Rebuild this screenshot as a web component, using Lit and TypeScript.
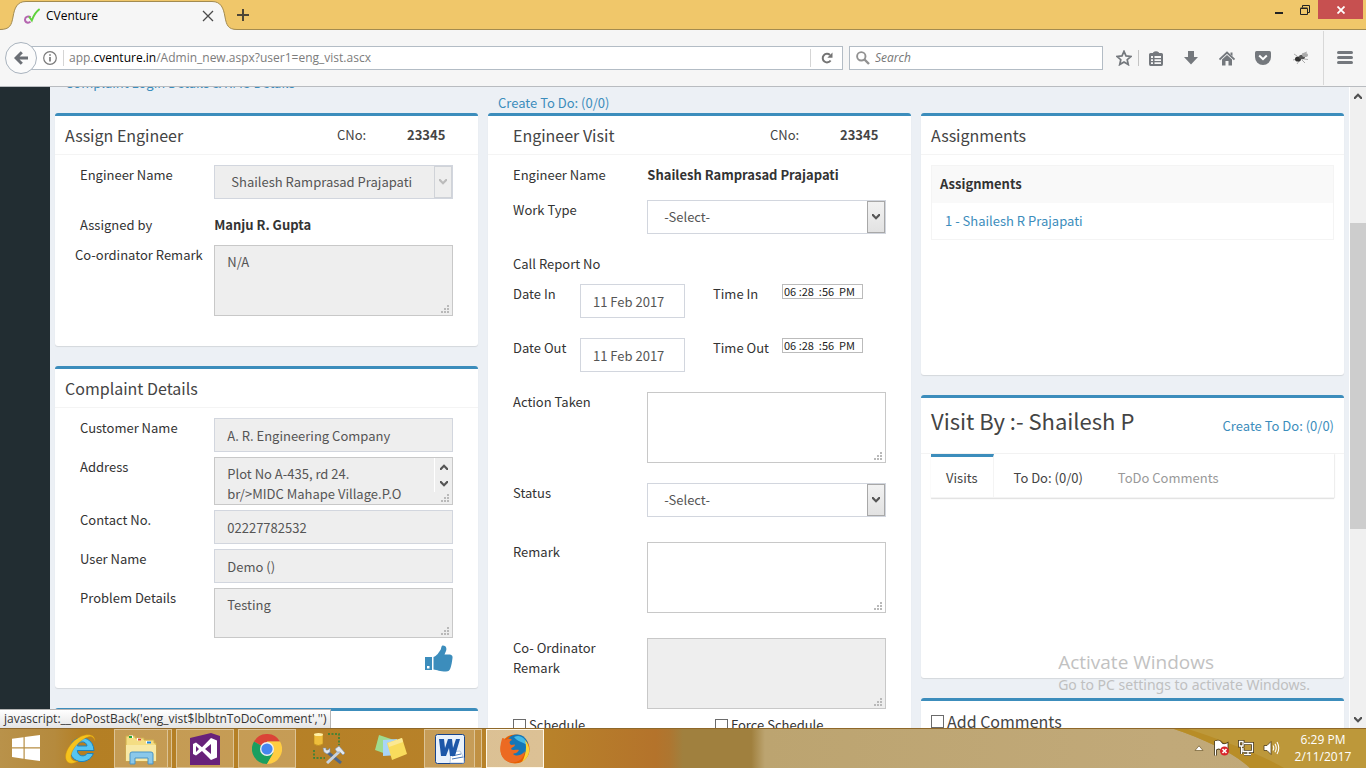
import { LitElement, html, css, svg, nothing } from "lit";
import { customElement, property } from "lit/decorators.js";

const uiFont = css`"Open Sans", "Noto Sans", sans-serif`;
const pageFont = css`"Noto Sans CJK SC", "Noto Sans", sans-serif`;

const chevron = (up: boolean) => svg`
  <svg class="chevron" viewBox="0 0 8 6" width="8" height="6" aria-hidden="true">
    <path d=${up ? "M0 4.2 4 0.2 8 4.2V6H6.6L4 3.2 1.4 6H0z" : "M0 1.8 4 5.8 8 1.8V0H6.6L4 2.8 1.4 0H0z"} fill="currentColor"/>
  </svg>`;

@customElement("browser-chrome")
export class BrowserChrome extends LitElement {
  static styles = css`
    :host { display: block; font: 12px/16px ${uiFont}; color: #000; }
    button { border: 0; background: none; padding: 0; margin: 0; font: inherit; color: inherit; display: flex; align-items: center; justify-content: center; }
    svg { display: block; flex: none; }
    .titlebar { display: flex; height: 29px; background: #f0c76a; border-bottom: 1px solid #a38b50; }
    .tab { display: grid; width: 237px; height: 30px; flex: none; }
    .tab > * { grid-area: 1 / 1; }
    .tab-body { display: flex; align-items: center; padding: 2px 23px 0 24px; }
    .tab-title { flex: 1; padding-left: 6px; }
    .tab-title, .url { white-space: nowrap; }
    .window-buttons { margin-left: auto; display: flex; align-items: flex-start; padding-right: 3px; }
    .window-buttons button { width: 26px; height: 19px; }
    .window-buttons .close { width: 45px; background: #c75050; }
    .toolbar { display: flex; align-items: center; height: 56px; background: #f6f6f6; border-bottom: 1px solid #b9bcc0; color: #74787d; }
    .back { width: 32px; height: 32px; margin: 0 -5px 0 5px; border: 1px solid #a9b3be; border-radius: 50%; background: #fbfbfb; z-index: 1; }
    .address { flex: 1; display: flex; align-items: center; height: 22px; border: 1px solid #b3bcc5; background: #fff; margin-left: -1px; padding-left: 11px; }
    .info { padding-right: 6px; }
    .url { flex: 1; border-left: 1px solid #d5d5d5; padding-left: 5px; color: #7c7c7c; }
    .url b { font-weight: 400; color: #000; }
    .reload { width: 32px; height: 18px; border-left: 1px solid #d5d5d5; }
    .search { display: flex; align-items: center; gap: 5px; height: 22px; width: 246px; border: 1px solid #b3bcc5; background: #fff; margin: 0 6px; padding-left: 6px; }
    .search input { flex: 1; min-width: 0; border: 0; padding: 0; background: none; font: 12px/16px ${uiFont}; outline: 0; }
    .search input::placeholder { color: #777; font-style: italic; opacity: 1; }
    .icon { width: 36px; height: 36px; }
    .star { width: 30px; height: 16px; border-right: 1px solid #c4c4c4; }
    .list { width: 34px; }
    .addon { width: 42px; padding-right: 2px; }
    .menu { width: 43px; height: 54px; border-left: 1px solid #d8d8d8; }
  `;

  render() {
    return html`
      <div class="titlebar">
        <div class="tab">
          <svg width="237" height="30" viewBox="0 0 237 30" aria-hidden="true">
            <path d="M0 29.5C10 29.5 11.5 25 13 17C14.5 8 17 1.5 26 1.5H212C221 1.5 223.500 8 225 17C226.500 25 228 29.500 237 29.500V30H0z" fill="#f6f6f6"/>
            <path d="M0 29.500C10 29.500 11.500 25 13 17C14.500 8 17 1.500 26 1.500H212C221 1.500 223.500 8 225 17C226.500 25 228 29.500 237 29.500" fill="none" stroke="#a38b50"/>
          </svg>
          <div class="tab-body">
            <svg width="16" height="16" viewBox="0 0 16 16" aria-hidden="true">
              <path d="M6.500 9.200C5 7.800 1.200 8.200 1 11.500 1 14.800 4.500 15.600 6.500 13.600" fill="none" stroke="#b566b0" stroke-width="2"/>
              <path d="M5 8.500 7.800 12.500C9.500 7.500 12 3.500 15.600 1" fill="none" stroke="#5fd23c" stroke-width="1.900"/>
            </svg>
            <span class="tab-title">CVenture</span>
            <button aria-label="Close tab"><svg width="12" height="12" viewBox="0 0 12 12"><path d="M1 1 11 11M11 1 1 11" stroke="#4a4a4a" stroke-width="1.300"/></svg></button>
          </div>
        </div>
        <button aria-label="New tab"><svg width="12" height="12" viewBox="0 0 12 12"><path d="M6 0V12M0 6H12" stroke="#4d4636" stroke-width="2"/></svg></button>
        <div class="window-buttons">
          <button aria-label="Minimize"><svg width="8" height="14" viewBox="0 0 8 14"><path d="M0 10H8" stroke="#222" stroke-width="2"/></svg></button>
          <button aria-label="Restore"><svg width="10" height="10" viewBox="0 0 10 10"><path d="M2.500 2.500V0.500H9.500V7.500H7.500" fill="none" stroke="#222"/><path d="M.500 3.500H7.500V9.500H.500zM.500 3H7.500" fill="none" stroke="#222"/></svg></button>
          <button class="close" aria-label="Close"><svg width="8" height="8" viewBox="0 0 8 8"><path d="M.500 .500 7.500 7.500M7.500 .500 .500 7.500" stroke="#fff" stroke-width="1.800"/></svg></button>
        </div>
      </div>
      <div class="toolbar">
        <button class="back" aria-label="Back"><svg width="14" height="14" viewBox="0 0 14 14"><path d="M7.800 1.200 2 7 7.800 12.800M2.500 7H14" fill="none" stroke="#6b6f75" stroke-width="3"/></svg></button>
        <div class="address">
          <span class="info"><svg width="14" height="14" viewBox="0 0 14 14"><circle cx="7" cy="7" r="6.300" fill="none" stroke="#7a7a7a" stroke-width="1.200"/><path d="M7 6V10.500M7 3.300V4.800" stroke="#7a7a7a" stroke-width="1.700"/></svg></span>
          <span class="url">app.<b>cventure.in</b>/Admin_new.aspx?user1=eng_vist.ascx</span>
          <button class="reload" aria-label="Reload"><svg width="12" height="12" viewBox="0 0 12 12"><path d="M9.600 8.500A4.300 4.300 0 1 1 9 3" fill="none" stroke="#747474" stroke-width="2"/><path d="M6.300 5.700H11.500V.500z" fill="#747474"/></svg></button>
        </div>
        <label class="search">
          <svg width="14" height="14" viewBox="0 0 14 14"><circle cx="5.300" cy="5.300" r="4.200" fill="none" stroke="#919191" stroke-width="1.900"/><path d="M8.500 8.500 13 13" stroke="#919191" stroke-width="2.400"/></svg>
          <input type="search" placeholder="Search" aria-label="Search">
        </label>
        <button class="icon star" aria-label="Bookmark"><svg width="16" height="16" viewBox="0 0 16 16"><path d="M8 1.300 10 5.900 15 6.400 11.200 9.700 12.300 14.600 8 12 3.700 14.600 4.800 9.700 1 6.400 6 5.900z" fill="none" stroke="#74787d" stroke-width="1.700"/></svg></button>
        <button class="icon list" aria-label="Library"><svg width="14" height="15" viewBox="0 0 14 15"><path d="M4 2V1.500Q7-1 10 1.500V2H12.500Q14 2 14 3.500V13Q14 15 12.500 15H1.500Q0 15 0 13V3.500Q0 2 1.500 2zM2 5V7H4V5zM5.500 5V7H12V5zM2 8.200V10H4V8.200zM5.500 8.200V10H12V8.200zM2 11.200V13H4V11.200zM5.500 11.200V13H12V11.200z" fill="#74787d" fill-rule="evenodd"/></svg></button>
        <button class="icon" aria-label="Downloads"><svg width="14" height="14" viewBox="0 0 14 14"><path d="M4 0H10V6H14L7 13.500 0 6H4z" fill="#74787d"/></svg></button>
        <button class="icon" aria-label="Home"><svg width="16" height="15" viewBox="0 0 16 15"><path d="M.500 8.500 8 1.500 15.500 8.500" fill="none" stroke="#74787d" stroke-width="1.800"/><path d="M3 8.500 8 4 13 8.500V14.500H9.500V10H6.500V14.500H3zM11.500 1.500H13.500V5L11.500 3.500z" fill="#74787d"/></svg></button>
        <button class="icon" aria-label="Pocket"><svg width="16" height="14" viewBox="0 0 16 14"><path d="M1.500 0H14.500Q16 0 16 1.500V6A8 8 0 0 1 0 6V1.500Q0 0 1.500 0z" fill="#74787d"/><path d="M4.200 4.500 8 8.200 11.800 4.500" fill="none" stroke="#fff" stroke-width="2"/></svg></button>
        <button class="icon addon" aria-label="Add-on"><svg width="16" height="14" viewBox="0 0 16 14"><path d="M4 5 1 3M4 8 0 9M6 10 4 13M9 9 12 12M11 8 15 8.500M9 3 14 1" stroke="#999" stroke-width=".800"/><ellipse cx="5" cy="8" rx="3" ry="2.600" fill="#333"/><ellipse cx="9" cy="6" rx="3" ry="2.300" fill="#555"/><ellipse cx="12" cy="4" rx="3" ry="2" fill="#aaa"/></svg></button>
        <button class="menu" aria-label="Menu"><svg width="16" height="14" viewBox="0 0 16 14"><path d="M1.500 1.600H14.500M1.500 6.600H14.500M1.500 11.600H14.500" stroke="#74787d" stroke-width="3" stroke-linecap="round"/></svg></button>
      </div>`;
  }
}

@customElement("task-bar")
export class TaskBar extends LitElement {
  static styles = css`
    :host { display: block; height: 40px; font: 12px/17px ${uiFont}; }
    svg { display: block; flex: none; }
    .bar { display: grid; height: 40px; background: linear-gradient(90deg, #b9924a 0, #b58a3d 4%, #b47f24 6%, #b8822a 40%, #b4732b 48%, #ae7630 49%, #a0803e 50%, #a0803e 55%, #bca470 56%, #c1a979 85%, #c0a878 100%); box-shadow: inset 0 1px #8f682a; }
    .bar > * { grid-area: 1 / 1; }
    .sweep { width: 220px; height: 40px; justify-self: end; }
    .items { display: flex; align-items: stretch; min-width: 0; }
    button, .edge { box-sizing: border-box; }
    button { display: flex; align-items: center; justify-content: center; margin: 0; padding: 0; border: 0; background: none; }
    .start { width: 52px; }
    .plain { width: 58px; margin-right: 4px; }
    .app { width: 58px; margin: 1px 4px 0 0; border: 1px solid #dcc395; background: #ffffff38; }
    .stack { width: 54px; margin-right: 0; }
    .edge { width: 4px; margin: 1px 4px 0 0; border: solid #dcc395; border-width: 1px 1px 1px 0; background: #ffffff20; }
    .word { width: 51px; }
    .edge-wide { width: 7px; }
    .active { background: #ffffff80; border-color: #fff8e8; }
    .tray { display: flex; align-items: center; justify-content: flex-end; gap: 8px; color: #fff; }
    .clock { text-align: center; width: 60px; margin: 0 13px 0 5px; }
  `;

  render() {
    return html`
      <div class="bar">
        <svg class="sweep" viewBox="0 0 220 40" preserveAspectRatio="none" aria-hidden="true">
          <path d="M28 1H220V40H104C88 25 60 12 28 1z" fill="#bd983a"/>
          <path d="M28 1H42C75 12 112 25 138 40H104C88 25 60 12 28 1z" fill="#b88d27"/>
        </svg>
        <div class="items">
          <button class="start" aria-label="Start"><svg width="28" height="26" viewBox="0 0 28 26"><path d="M0 3.800 11.500 2.200V12.300H0zM12.700 2 28 0V12.300H12.700zM0 13.500H11.500V23.700L0 22.100zM12.700 13.500H28V26L12.700 23.900z" fill="#fff"/></svg></button>
          <button class="plain" aria-label="Internet Explorer"><svg width="32" height="32" viewBox="0 0 32 32"><path d="M29 18.500H12.300C12.600 24.600 20 25.300 22 21.500H28.300C24 33.500 5 32 5 17.500 5 2.500 28 1 29 18.500zM12.500 14H22C21.500 8.500 13 8.500 12.500 14z" fill="#56c5f1" stroke="#1d83bd"/><path d="M30 9C30 0 17 1 8 10 0 18-2 28 4 31 7 32 10 31 13 29 6 30 4 25 8 18 13 9 24 3 27 5 29 6 29 7 30 9z" fill="#f6c31c" stroke="#c98a10" stroke-width=".500"/></svg></button>
          <button class="app stack" aria-label="File Explorer"><svg width="34" height="32" viewBox="0 0 34 32"><path d="M2 3H11V5H20V7H30V10H32V28H2z" fill="#f4dd83" stroke="#cfae4d"/><path d="M5 2.500H9V5H5zM13 5H17V7.500H13zM22 8H27V10.500H22z" fill="#fff"/><path d="M5 3H8V5H5z" fill="#25a53a"/><path d="M14 5.500H17V7.500H14z" fill="#d84a2b"/><path d="M23 8.500H27V10.500H23z" fill="#2589d2"/><path d="M2 12H32V28H2z" fill="#f8e9a6"/><path d="M6 31V21Q6 19 8 19H27Q29 19 29 21V31H24V25H11V31z" fill="#8ac8ea" stroke="#4a94c5"/></svg></button>
          <span class="edge"></span>
          <button class="app" aria-label="Visual Studio"><svg width="30" height="32" viewBox="0 0 30 32"><path d="M0 5 21 0 30 3V32H0z" fill="#68217a"/><path d="M3 11 6 9.500 12 14.200 21 5 27 7.500V24.500L21 27 12 18 6 22.500 3 21zM6 13V19L9 16zM15 16 21 21V11z" fill="#fff" fill-rule="evenodd"/></svg></button>
          <button class="app" aria-label="Chrome"><svg width="30" height="30" viewBox="0 0 30 30"><path d="M15 15 2 7.500A15 15 0 0 1 28 7.500H15z" fill="#db4437"/><path d="M15 15 2 7.500A15 15 0 0 0 15 30L21.500 18.700z" fill="#1a9f60"/><path d="M15 7.500H28A15 15 0 0 1 15 30L21.500 18.700z" fill="#ffcd42"/><circle cx="15" cy="15" r="7" fill="#f1f1f1"/><circle cx="15" cy="15" r="5.600" fill="#4587f0"/></svg></button>
          <button class="plain" aria-label="Database tools"><svg width="32" height="32" viewBox="0 0 32 32"><path d="M15 2H26V13M1 18V26H12" fill="none" stroke="#28833b" stroke-width="1.500" stroke-dasharray="2 1.500"/><path d="M1 2.500Q5 0 10 2.500V12Q5 15 1 12z" fill="#efbe3b" stroke="#b98717" stroke-width=".600"/><ellipse cx="5.500" cy="2.500" rx="4.500" ry="1.500" fill="#fff0a8"/><path d="M13 19 28 31" stroke="#4e6788" stroke-width="3"/><path d="M28 18 14 31" stroke="#c7d2de" stroke-width="3"/><path d="M10 16 13 16 13 18 15 18 17 16 17 20 14 22 11 20zM22 17 26 14 32 21 30 23 27 20 24 20z" fill="#e3e8ef" stroke="#7890ac" stroke-width=".600"/></svg></button>
          <button class="plain" aria-label="Sticky Notes"><svg width="34" height="28" viewBox="0 0 34 28"><path d="M5 1 20 6 15 21 1 16z" fill="#9fdc8f"/><path d="M9 6 23 5 24 21 9 22z" fill="#a9d4f7"/><path d="M13 9 28 4 33 20 18 26z" fill="#f9dc5c"/><path d="M14 9 28 4 29 8 15 13z" fill="#fbe893"/></svg></button>
          <button class="app stack word" aria-label="Word"><svg width="30" height="30" viewBox="0 0 30 30"><rect x=".500" y=".500" width="29" height="29" rx="2" fill="#e9f1fb" stroke="#17448c"/><path d="M16 18 25 17 29 24V29H15z" fill="#fff" stroke="#9db5d4" stroke-width=".700"/><path d="M17 22 26 20M17 25 28 23" stroke="#4877b7"/><path d="M4 5H9L10 14 13 5H17L18 14 21 5H25L20 22H15L14 14 11 22H6z" fill="#1d57a8"/></svg></button>
          <span class="edge edge-wide"></span>
          <button class="app active" aria-label="Firefox"><svg width="30" height="30" viewBox="0 0 30 30"><circle cx="15" cy="15" r="14.500" fill="#e66000"/><circle cx="17" cy="11.500" r="11" fill="#1477b8"/><path d="M14 3C20 0 26 4 27 11 23 8 18 8 14 3z" fill="#46b9e4"/><path d="M25 6C31 12 31 23 22 28 26 21 27 13 25 6z" fill="#fcd336"/><path d="M2 5C2 3 4 4 6 6 9 4 11 5 12 6 9 7 9 9 11 11L15 10.500C15 13 12 13 11 15 13 17 17 15 19 16 17 20 14 19 13 20 18 24 24 19 25 17 24 28 11 32 4 25-1 20 0 11 2 5z" fill="#ec6a22"/></svg></button>
        </div>
        <div class="tray">
          <svg width="10" height="6" viewBox="0 0 10 6"><path d="M1 5.500 5 .800 9 5.500z" fill="#fff" stroke="#6e592a" stroke-width=".700"/></svg>
          <svg width="18" height="18" viewBox="0 0 18 18"><path d="M3.500 2V16.500M3.500 3Q7 1 9 4T15 5V11Q11 12 9 10T4 10z" fill="#fff" stroke="#4b3b1a" stroke-width="3"/><path d="M3.500 2V16.500M3.500 3Q7 1 9 4T15 5V11Q11 12 9 10T4 10z" fill="#fff" stroke="#fff" stroke-width="1.200"/><circle cx="12.500" cy="12" r="4.500" fill="#d8262c"/><path d="M10.500 10 14.500 14M14.500 10 10.500 14" stroke="#fff" stroke-width="1.600"/></svg>
          <svg width="17" height="16" viewBox="0 0 17 16"><g fill="none"><path d="M6 3.500H14.500V11.500H5V8M10 11.500V14M6 14.500H13M1.500 1.500H5V6H1.500zM3.500 6V14" stroke="#4b3b1a" stroke-width="3"/><path d="M6 3.500H14.500V11.500H5V8M10 11.500V14M6 14.500H13M1.500 1.500H5V6H1.500zM3.500 6V14" stroke="#fff" stroke-width="1.300"/></g></svg>
          <svg width="17" height="16" viewBox="0 0 17 16"><path d="M1 5.500H4L8 1.500V14.500L4 10.500H1z" fill="#fff" stroke="#4b3b1a" stroke-width=".800"/><path d="M10 5.500Q11.500 8 10 10.500M12 3.800Q14.500 8 12 12.200M14 2Q17.500 8 14 14" fill="none" stroke="#fff" stroke-width="1.100"/></svg>
          <div class="clock">6:29 PM<br>2/11/2017</div>
        </div>
      </div>`;
  }
}

type FieldKind = "input" | "textarea" | "select";

@customElement("form-control")
export class FormControl extends LitElement {
  @property() kind: FieldKind = "input";
  @property() value = "";
  @property() label = "";
  @property({ type: Boolean }) disabled = false;
  @property() size = "tall";

  static styles = css`
    :host { display: block; min-width: 0; font: 13px/20px ${pageFont}; }
    .wrap { display: grid; }
    .wrap > * { grid-area: 1 / 1; }
    .control { box-sizing: border-box; width: 100%; height: 34px; margin: 0; padding: 0 12px; border: 1px solid #d2d6de; border-radius: 0; background: #fff; color: #555; font: inherit; outline: 0; opacity: 1; appearance: none; }
    select.control { padding: 0 20px 0 16px; }
    textarea.control { display: block; padding: 6px 12px; border-color: #c8c8c8; resize: none; overflow: hidden; }
    .control:disabled { background: #eee; color: #555; }
    textarea.tall { height: 71px; }
    textarea.medium { height: 50px; }
    textarea.short { height: 48px; }
    .arrow { display: flex; align-items: center; justify-content: center; justify-self: end; box-sizing: border-box; width: 18px; margin: 1px; border: 1px solid #a8a8a8; background: linear-gradient(#f2f2f2, #e2e2e2); color: #555; pointer-events: none; }
    .arrow.off { border-color: #d0d3d8; background: #eee; color: #bbb; }
    .grip { justify-self: end; align-self: end; margin: 3px 4px; pointer-events: none; }
    .spin { display: flex; flex-direction: column; justify-content: space-around; align-items: center; justify-self: end; align-self: start; width: 17px; height: 34px; margin: 1px; border-left: 1px solid #fff; color: #555; }
  `;

  private renderArea() {
    return html`
      <textarea class="control ${this.size}" aria-label=${this.label} ?disabled=${this.disabled} .value=${this.value}></textarea>
      ${this.size === "short" ? html`<span class="spin">${chevron(true)}${chevron(false)}</span>` : nothing}
      <svg class="grip" width="8" height="8" viewBox="0 0 8 8" aria-hidden="true">
        <path d="M6 0H8V2H6zM3 3H5V5H3zM6 3H8V5H6zM0 6H2V8H0zM3 6H5V8H3zM6 6H8V8H6z" fill="#b9b9b9"/>
      </svg>`;
  }

  render() {
    const body = this.kind === "textarea"
      ? this.renderArea()
      : this.kind === "select"
        ? html`<select class="control" aria-label=${this.label} ?disabled=${this.disabled}><option>${this.value}</option></select>
            <span class="arrow ${this.disabled ? "off" : ""}">${chevron(false)}</span>`
        : html`<input class="control" type="text" aria-label=${this.label} ?disabled=${this.disabled} .value=${this.value}>`;
    return html`<div class="wrap">${body}</div>`;
  }
}

@customElement("app-root")
export class AppRoot extends LitElement {
  static styles = css`
    :host { display: flex; flex-direction: column; height: 100vh; overflow: hidden; font: 13px/20px ${pageFont}; color: #333; }
    a { color: #3c8dbc; text-decoration: none; }
    h2, h3 { margin: 0; font-weight: 400; color: #444; }
    h3 { font-size: 16px; line-height: 20px; }
    h2 { font-size: 22px; line-height: 26px; }
    .viewport { flex: 1; min-height: 0; display: flex; position: relative; overflow: hidden; background: #ecf0f5; }
    .sidebar { width: 50px; background: #222d32; }
    .content { flex: 1; min-width: 0; padding: 0 5px; }
    .crumbs { display: flex; align-items: flex-end; height: 6px; padding-left: 10px; }
    .columns { display: grid; grid-template-columns: repeat(3, minmax(0, 1fr)); gap: 10px; }
    .column { display: flex; flex-direction: column; gap: 20px; min-width: 0; }
    .lead { height: 20px; margin-bottom: -20px; padding-left: 10px; }
    .box { background: #fff; border-top: 3px solid #3c8dbc; border-radius: 3px; box-shadow: 0 1px 1px rgba(0, 0, 0, .1); }
    .head { display: grid; grid-template-columns: 1fr 70px 71px; align-items: center; height: 38px; padding-left: 10px; border-bottom: 1px solid #f4f4f4; color: #444; }
    .indent { padding-left: 25px; }
    .head-visit { height: 55px; grid-template-columns: 1fr auto; padding-right: 10px; }
    .head-visit h2 { align-self: start; padding-top: 9px; }
    .form { display: grid; gap: 5px; padding: 10px 25px 0; }
    .row { display: grid; grid-template-columns: 9fr 16fr; align-items: start; }
    .assign .form { gap: 10px; padding-bottom: 30px; }
    .pull { margin-left: -5px; }
    .select-row { padding-bottom: 6px; }
    .complaint .form { padding-bottom: 16px; }
    .thumb { display: flex; justify-content: flex-end; padding-top: 2px; }
    .thumb svg { display: block; }
    .visit .form { gap: 25px; }
    .visit .name-row { margin-bottom: -10px; }
    .visit .report-row { margin: -5px 0 -15px; }
    .times { display: grid; grid-template-columns: 67fr 133fr 69fr 104fr; align-items: start; gap: 20px 0; margin-bottom: -5px; }
    .times form-control { width: 105px; }
    .time { box-sizing: border-box; width: 81px; height: 15px; padding: 0 0 1px 1px; border: 1px solid #bbb; background: #fff; color: #222; font: 11px/12px ${pageFont}; outline: 0; }
    .action-row { margin-bottom: -5px; }
    .wrap-label { width: 90px; }
    .checks { display: grid; grid-template-columns: 202fr 171fr; margin-top: -19px; }
    .check { display: flex; align-items: center; gap: 3px; }
    .check input { appearance: none; width: 13px; height: 13px; margin: 0; border: 1px solid #6b6b6b; background: #fff; }
    .assignments { min-height: 259px; }
    .pad { padding: 10px 10px 0; }
    table { width: 100%; border-collapse: collapse; border: 1px solid #f4f4f4; }
    th, td { text-align: left; padding: 8px; height: 20px; }
    th { background: #f9f9f9; padding-bottom: 9px; color: #333; }
    td { padding-left: 13px; }
    .visits { min-height: 280px; }
    .tabs { display: flex; margin: 0 10px; height: 43px; box-shadow: 0 1px 1px rgba(0, 0, 0, .1), 1px 0 1px rgba(0, 0, 0, .05); border-bottom: 1px solid #f4f4f4; gap: 5px; }
    .tabs a { display: flex; align-items: center; padding: 5px 15px 0; color: #444; }
    .tabs .current { padding: 2px 15px 0; border-top: 3px solid #3c8dbc; border-right: 1px solid #f4f4f4; background: #fff; }
    .tabs .muted { padding-left: 15px; color: #999; }
    .comments .check { padding: 10px; font-size: 16px; color: #444; }
    .spacer { height: 60px; }
    .scrollbar { display: flex; flex-direction: column; width: 16px; border-left: 1px solid #fff; background: #f0f0f0; color: #505050; }
    .scroll-end { display: flex; align-items: center; justify-content: center; height: 17px; }
    .track { flex: 1; display: grid; grid-template-rows: 119fr 306fr 182fr; }
    .thumb-bar { grid-row: 2; background: #cdcdcd; }
    .status { position: absolute; left: 0; bottom: 0; box-sizing: border-box; height: 19px; padding: 0 4px; border: solid #b5b5b5; border-width: 1px 1px 0 0; background: linear-gradient(#fff, #e4e4e4); color: #333; font: 12px/17px ${uiFont}; }
    .watermark { position: absolute; right: 56px; bottom: 33px; color: #bbb; font: 14px/20px "Noto Sans", sans-serif; opacity: .900; }
    .watermark p { margin: 0; }
    .watermark .big { font: 19px/26px "Open Sans", sans-serif; }
  `;

  private field(label: string, kind: FieldKind, value: string, opts: { size?: string; disabled?: boolean; row?: string; text?: string } = {}) {
    return html`
      <div class="row ${opts.row ?? ""}">
        <label class=${opts.text ?? ""}>${label}</label>
        <form-control kind=${kind} label=${label} value=${value} size=${opts.size ?? "tall"} ?disabled=${opts.disabled ?? false}></form-control>
      </div>`;
  }

  private caseHead(title: string, indent = "") {
    return html`<header class="head ${indent}"><h3>${title}</h3><span>CNo:</span><b>23345</b></header>`;
  }

  private check(text: string) {
    return html`<label class="check"><input type="checkbox"><span>${text}</span></label>`;
  }

  private dateRow(suffix: string) {
    return html`
      <label>Date ${suffix}</label>
      <form-control label="Date ${suffix}" value="11 Feb 2017"></form-control>
      <label for="time-${suffix}">Time ${suffix}</label>
      <input class="time" id="time-${suffix}" type="text" value="06 :28  :56  PM">`;
  }

  render() {
    const off = { disabled: true };
    return html`
      <browser-chrome></browser-chrome>
      <div class="viewport">
        <nav class="sidebar"></nav>
        <main class="content">
          <div class="crumbs"><a href="#">Complaint Login Details &amp; RMS Details</a></div>
          <div class="columns">
            <div class="column">
              <div class="lead"></div>
              <section class="box assign">
                ${this.caseHead("Assign Engineer")}
                <div class="form">
                  ${this.field("Engineer Name", "select", "Shailesh Ramprasad Prajapati", { disabled: true, row: "select-row" })}
                  <div class="row"><span>Assigned by</span><b>Manju R. Gupta</b></div>
                  ${this.field("Co-ordinator Remark", "textarea", "N/A", { disabled: true, text: "pull" })}
                </div>
              </section>
              <section class="box complaint">
                <header class="head"><h3>Complaint Details</h3></header>
                <div class="form">
                  ${this.field("Customer Name", "input", "A. R. Engineering Company", off)}
                  ${this.field("Address", "textarea", "Plot No A-435, rd 24.\nbr/>MIDC Mahape Village.P.O", { disabled: true, size: "short" })}
                  ${this.field("Contact No.", "input", "02227782532", off)}
                  ${this.field("User Name", "input", "Demo ()", off)}
                  ${this.field("Problem Details", "textarea", "Testing", { disabled: true, size: "medium" })}
                  <div class="thumb">
                    <a href="#" aria-label="Approve"><svg width="28" height="27" viewBox="0 0 28 27">
                      <path d="M0 12H7V25H0zM2 21V23.500H4.500V21z" fill="#3c8dbc" fill-rule="evenodd"/>
                      <path d="M8.500 12C12 11 14 7 15.500 5 16.500 3 16 .500 18 .500 21 .500 22 3.500 21 6L19.500 9.500H25Q28 10 27.500 13C27 17 26.500 20 25.500 23Q24.500 26.500 21 26.500C15 26.500 12 25 8.500 24.500z" fill="#3c8dbc"/>
                    </svg></a>
                  </div>
                </div>
              </section>
              <section class="box"><div class="spacer"></div></section>
            </div>
            <div class="column">
              <div class="lead"><a href="#">Create To Do: (0/0)</a></div>
              <section class="box visit">
                ${this.caseHead("Engineer Visit", "indent")}
                <div class="form">
                  <div class="row name-row"><span>Engineer Name</span><b>Shailesh Ramprasad Prajapati</b></div>
                  ${this.field("Work Type", "select", "-Select-")}
                  <div class="row report-row"><span>Call Report No</span></div>
                  <div class="times">${this.dateRow("In")}${this.dateRow("Out")}</div>
                  ${this.field("Action Taken", "textarea", "", { row: "action-row" })}
                  ${this.field("Status", "select", "-Select-")}
                  ${this.field("Remark", "textarea", "")}
                  ${this.field("Co- Ordinator Remark", "textarea", "", { disabled: true, text: "wrap-label" })}
                  <div class="checks">${this.check("Schedule")}${this.check("Force Schedule")}</div>
                </div>
              </section>
            </div>
            <div class="column">
              <div class="lead"></div>
              <section class="box assignments">
                <header class="head"><h3>Assignments</h3></header>
                <div class="pad">
                  <table>
                    <thead><tr><th>Assignments</th></tr></thead>
                    <tbody><tr><td><a href="#">1 - Shailesh R Prajapati</a></td></tr></tbody>
                  </table>
                </div>
              </section>
              <section class="box visits">
                <header class="head head-visit"><h2>Visit By :- Shailesh P</h2><a href="#">Create To Do: (0/0)</a></header>
                <nav class="tabs"><a class="current" href="#">Visits</a><a href="#">To Do: (0/0)</a><a class="muted" href="#">ToDo Comments</a></nav>
              </section>
              <section class="box comments">${this.check("Add Comments")}</section>
            </div>
          </div>
        </main>
        <div class="scrollbar">
          <span class="scroll-end">${chevron(true)}</span>
          <div class="track"><div class="thumb-bar"></div></div>
          <span class="scroll-end">${chevron(false)}</span>
        </div>
        <div class="watermark"><p class="big">Activate Windows</p><p>Go to PC settings to activate Windows.</p></div>
        <div class="status">javascript:__doPostBack('eng_vist$lblbtnToDoComment','')</div>
      </div>
      <task-bar></task-bar>`;
  }
}
